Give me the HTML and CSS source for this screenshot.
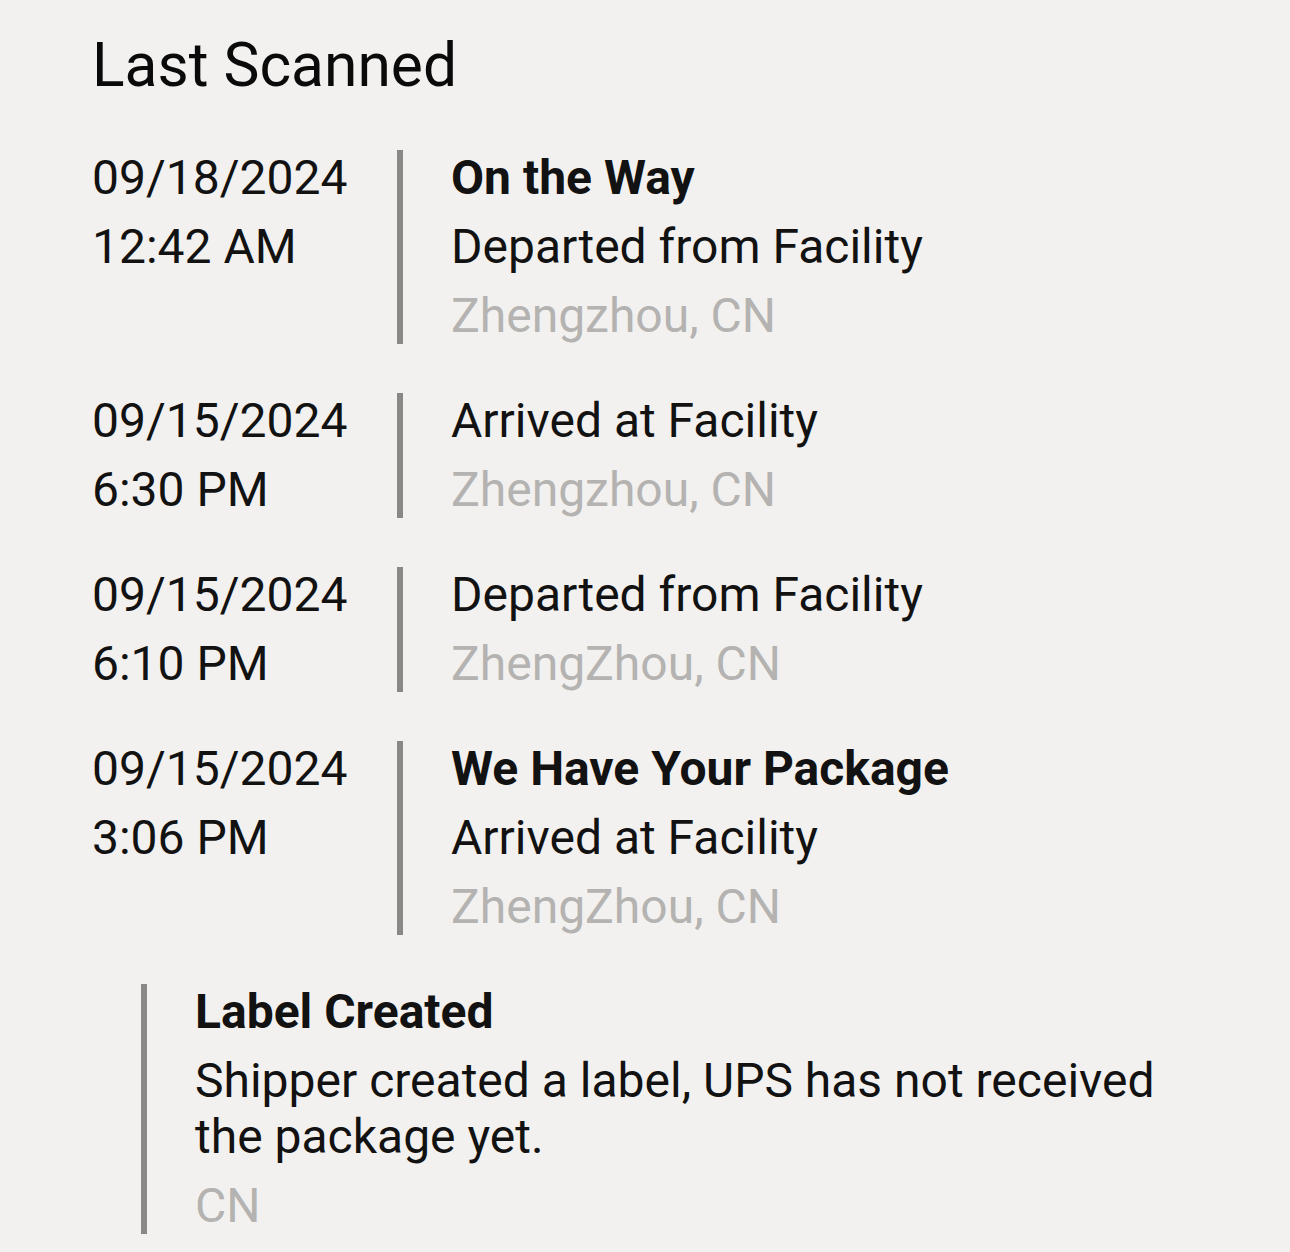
FILE: index.html
```html
<!DOCTYPE html>
<html lang="en">
<head>
<meta charset="utf-8">
<title>Last Scanned</title>
<link rel="stylesheet" href="styles.css">
</head>
<body>
<div class="page">
  <h1 class="title">Last Scanned</h1>
  <div class="rows">
    <div class="row">
      <div class="when">
        <div class="line">09/18/2024</div>
        <div class="line">12:42 AM</div>
      </div>
      <div class="what">
        <div class="line strong">On the Way</div>
        <div class="line">Departed from Facility</div>
        <div class="line muted">Zhengzhou, CN</div>
      </div>
    </div>
    <div class="row">
      <div class="when">
        <div class="line">09/15/2024</div>
        <div class="line">6:30 PM</div>
      </div>
      <div class="what">
        <div class="line">Arrived at Facility</div>
        <div class="line muted">Zhengzhou, CN</div>
      </div>
    </div>
    <div class="row">
      <div class="when">
        <div class="line">09/15/2024</div>
        <div class="line">6:10 PM</div>
      </div>
      <div class="what">
        <div class="line">Departed from Facility</div>
        <div class="line muted">ZhengZhou, CN</div>
      </div>
    </div>
    <div class="row">
      <div class="when">
        <div class="line">09/15/2024</div>
        <div class="line">3:06 PM</div>
      </div>
      <div class="what">
        <div class="line strong">We Have Your Package</div>
        <div class="line">Arrived at Facility</div>
        <div class="line muted">ZhengZhou, CN</div>
      </div>
    </div>
    <div class="row label-row">
      <div class="what label-what">
        <div class="line strong">Label Created</div>
        <div class="line">Shipper created a label, UPS has not received the package yet.</div>
        <div class="line muted">CN</div>
      </div>
    </div>
  </div>
</div>
</body>
</html>
```

FILE: styles.css
```css
html, body {
  margin: 0;
  padding: 0;
  background: #f2f1ef;
}
body {
  font-family: Roboto, "Noto Sans", "Liberation Sans", sans-serif;
  color: #121212;
}
.page {
  padding: 35px 0 0 92px;
}
.title {
  margin: 0 0 53px 0;
  font-size: 60.5px;
  line-height: 62px;
  font-weight: 400;
  color: #0a0a0a;
}
.rows {
  display: flex;
  flex-direction: column;
  gap: 49px;
}
.row {
  display: flex;
}
.when {
  width: 305px;
  display: flex;
  flex-direction: column;
  gap: 13px;
}
.what {
  border-left: 6px solid #8c8787;
  padding-left: 48px;
  display: flex;
  flex-direction: column;
  gap: 13px;
}
.line {
  font-size: 48px;
  line-height: 56px;
}
.strong {
  font-weight: 700;
}
.muted {
  color: #b4b3b1;
}
.label-row {
  margin-left: 49px;
}
.label-what {
  width: 980px;
}
```
